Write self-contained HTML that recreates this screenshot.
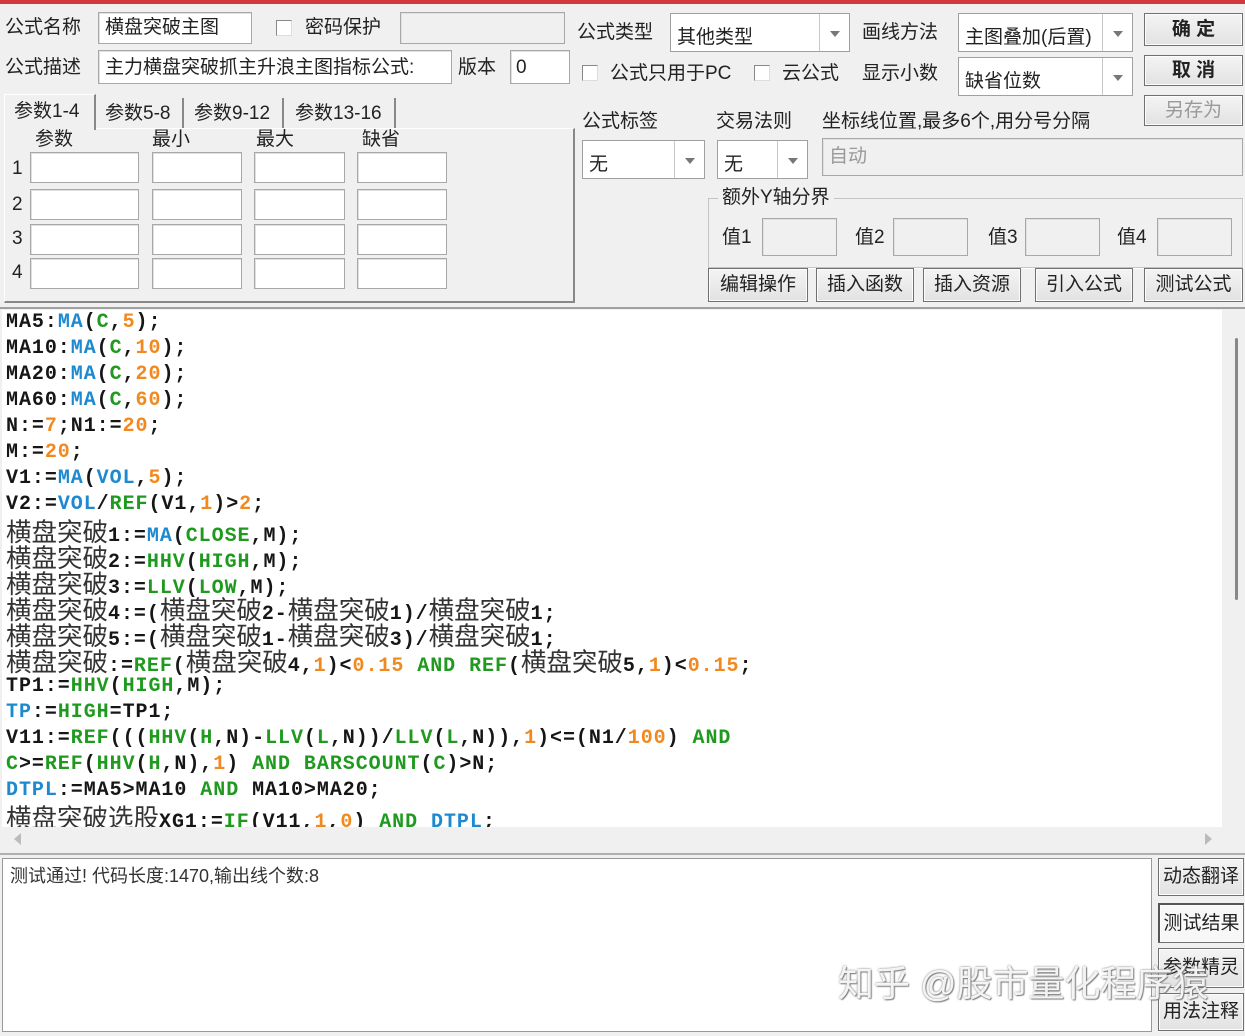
<!DOCTYPE html><html><head><meta charset="utf-8"><style>
*{box-sizing:border-box;margin:0;padding:0}
body{width:1245px;height:1036px;background:#f0f0f0;position:relative;overflow:hidden;font-family:"Liberation Sans","Microsoft YaHei","Noto Sans CJK SC",sans-serif;font-size:19px;color:#222}
.a{position:absolute}
.lb{position:absolute;white-space:nowrap;line-height:1}
.in{position:absolute;background:#fff;border:1px solid #a8a8a8;box-shadow:inset 1px 1px 0 #e0e0e0}
.dis{background:#f0f0f0}
.cb{position:absolute;width:16px;height:16px;background:#fff;border:1px solid #888;border-right-color:#ddd;border-bottom-color:#ddd}
.combo{position:absolute;background:#fff;border:1px solid #a0a0a0;font-size:19px;padding:8px 0 0 6px;white-space:nowrap}
.combo .ar{position:absolute;top:0;right:0;width:30px;height:100%;border-left:1px solid #c8c8c8}
.combo .ar:after{content:"";position:absolute;left:10px;top:50%;margin-top:-2px;border:5px solid transparent;border-top:6px solid #777;border-bottom:0}
.btn{position:absolute;background:linear-gradient(#f4f4f4,#e2e2e2);border:1px solid #707070;box-shadow:inset 0 0 0 1px #fcfcfc;text-align:center;font-size:19px;white-space:nowrap}
.code{position:absolute;left:2px;top:310px;width:1220px;height:517px;background:#fff;overflow:hidden}
.code div{height:26px;line-height:26px;font-family:"Liberation Mono",monospace;font-weight:bold;font-size:20px;letter-spacing:0.95px;white-space:pre;color:#161616;padding-left:4px}
.c{font-family:"Noto Sans CJK SC",sans-serif;font-weight:normal;font-size:25.5px;color:#333;letter-spacing:0}
.b{color:#1d8ad0}.g{color:#1f9a1f}.o{color:#f08a20}
</style></head><body>
<div class="a" style="left:0;top:0;width:1245px;height:4px;background:#d2383c"></div>

<div class="lb" style="left:5px;top:18px">公式名称</div>
<div class="in" style="left:98px;top:12px;width:154px;height:32px"></div>
<div class="lb" style="left:105px;top:18px">横盘突破主图</div>
<div class="cb" style="left:276px;top:20px"></div>
<div class="lb" style="left:305px;top:18px">密码保护</div>
<div class="in dis" style="left:400px;top:12px;width:165px;height:32px"></div>

<div class="lb" style="left:5px;top:58px">公式描述</div>
<div class="in" style="left:98px;top:50px;width:354px;height:34px"></div>
<div class="lb" style="left:105px;top:58px">主力横盘突破抓主升浪主图指标公式:</div>
<div class="lb" style="left:458px;top:58px">版本</div>
<div class="in" style="left:510px;top:50px;width:60px;height:34px"></div>
<div class="lb" style="left:516px;top:58px">0</div>

<div class="a" style="left:4px;top:128px;width:571px;height:175px;border:1px solid #d8d8d8;border-right:2px solid #888;border-bottom:2px solid #888;border-left-color:#fff;border-top-color:#fff"></div>
<div class="a" style="left:4px;top:94px;width:92px;height:36px;border:1px solid #fff;border-right:2px solid #888;border-bottom:0;background:#f0f0f0"></div>
<div class="lb" style="left:14px;top:102px">参数1-4</div>
<div class="a" style="left:97px;top:98px;width:87px;height:30px;border-right:2px solid #888"></div>
<div class="lb" style="left:105px;top:104px">参数5-8</div>
<div class="a" style="left:186px;top:98px;width:98px;height:30px;border-right:2px solid #888"></div>
<div class="lb" style="left:194px;top:104px">参数9-12</div>
<div class="a" style="left:286px;top:98px;width:110px;height:30px;border-right:2px solid #888"></div>
<div class="lb" style="left:295px;top:104px">参数13-16</div>
<div class="lb" style="left:35px;top:130px">参数</div>
<div class="lb" style="left:152px;top:130px">最小</div>
<div class="lb" style="left:256px;top:130px">最大</div>
<div class="lb" style="left:362px;top:130px">缺省</div>
<div class="lb" style="left:12px;top:159px">1</div><div class="lb" style="left:12px;top:195px">2</div><div class="lb" style="left:12px;top:229px">3</div><div class="lb" style="left:12px;top:263px">4</div>
<div class="in" style="left:30px;top:152px;width:109px;height:31px"></div><div class="in" style="left:152px;top:152px;width:90px;height:31px"></div><div class="in" style="left:254px;top:152px;width:91px;height:31px"></div><div class="in" style="left:357px;top:152px;width:90px;height:31px"></div>
<div class="in" style="left:30px;top:189px;width:109px;height:31px"></div><div class="in" style="left:152px;top:189px;width:90px;height:31px"></div><div class="in" style="left:254px;top:189px;width:91px;height:31px"></div><div class="in" style="left:357px;top:189px;width:90px;height:31px"></div>
<div class="in" style="left:30px;top:224px;width:109px;height:31px"></div><div class="in" style="left:152px;top:224px;width:90px;height:31px"></div><div class="in" style="left:254px;top:224px;width:91px;height:31px"></div><div class="in" style="left:357px;top:224px;width:90px;height:31px"></div>
<div class="in" style="left:30px;top:258px;width:109px;height:31px"></div><div class="in" style="left:152px;top:258px;width:90px;height:31px"></div><div class="in" style="left:254px;top:258px;width:91px;height:31px"></div><div class="in" style="left:357px;top:258px;width:90px;height:31px"></div>

<div class="lb" style="left:577px;top:23px">公式类型</div>
<div class="combo" style="left:670px;top:13px;width:180px;height:39px">其他类型<span class="ar"></span></div>
<div class="lb" style="left:862px;top:23px">画线方法</div>
<div class="combo" style="left:958px;top:13px;width:175px;height:39px">主图叠加(后置)<span class="ar"></span></div>
<div class="btn" style="left:1144px;top:13px;width:99px;height:33px;line-height:31px;font-weight:bold">确 定</div>
<div class="btn" style="left:1144px;top:55px;width:99px;height:31px;line-height:29px;font-weight:bold">取 消</div>
<div class="btn" style="left:1144px;top:95px;width:99px;height:31px;line-height:29px;color:#999">另存为</div>
<div class="cb" style="left:582px;top:65px"></div>
<div class="lb" style="left:610px;top:64px">公式只用于PC</div>
<div class="cb" style="left:754px;top:65px"></div>
<div class="lb" style="left:782px;top:64px">云公式</div>
<div class="lb" style="left:862px;top:64px">显示小数</div>
<div class="combo" style="left:958px;top:57px;width:175px;height:39px">缺省位数<span class="ar"></span></div>
<div class="lb" style="left:582px;top:112px">公式标签</div>
<div class="lb" style="left:716px;top:112px">交易法则</div>
<div class="lb" style="left:822px;top:112px">坐标线位置,最多6个,用分号分隔</div>
<div class="combo" style="left:582px;top:140px;width:123px;height:39px">无<span class="ar"></span></div>
<div class="combo" style="left:717px;top:140px;width:91px;height:39px">无<span class="ar"></span></div>
<div class="in dis" style="left:822px;top:138px;width:421px;height:38px"></div>
<div class="lb" style="left:829px;top:147px;color:#999">自动</div>
<div class="a" style="left:708px;top:198px;width:535px;height:70px;border:1px solid #c4c4c4;box-shadow:1px 1px 0 #fff"></div>
<div class="lb" style="left:718px;top:188px;background:#f0f0f0;padding:0 4px">额外Y轴分界</div>
<div class="lb" style="left:722px;top:228px">值1</div><div class="in dis" style="left:762px;top:218px;width:75px;height:38px"></div>
<div class="lb" style="left:855px;top:228px">值2</div><div class="in dis" style="left:893px;top:218px;width:75px;height:38px"></div>
<div class="lb" style="left:988px;top:228px">值3</div><div class="in dis" style="left:1025px;top:218px;width:75px;height:38px"></div>
<div class="lb" style="left:1117px;top:228px">值4</div><div class="in dis" style="left:1157px;top:218px;width:75px;height:38px"></div>
<div class="btn" style="left:708px;top:268px;width:100px;height:34px;line-height:32px">编辑操作</div>
<div class="btn" style="left:816px;top:268px;width:98px;height:34px;line-height:32px">插入函数</div>
<div class="btn" style="left:923px;top:268px;width:98px;height:34px;line-height:32px">插入资源</div>
<div class="btn" style="left:1035px;top:268px;width:98px;height:34px;line-height:32px">引入公式</div>
<div class="btn" style="left:1144px;top:268px;width:99px;height:34px;line-height:32px">测试公式</div>

<div class="a" style="left:0;top:307px;width:1245px;height:2px;background:#a0a0a0"></div>
<div class="code">
<div>MA5:<span class="b">MA</span>(<span class="g">C</span>,<span class="o">5</span>);</div>
<div>MA10:<span class="b">MA</span>(<span class="g">C</span>,<span class="o">10</span>);</div>
<div>MA20:<span class="b">MA</span>(<span class="g">C</span>,<span class="o">20</span>);</div>
<div>MA60:<span class="b">MA</span>(<span class="g">C</span>,<span class="o">60</span>);</div>
<div>N:=<span class="o">7</span>;N1:=<span class="o">20</span>;</div>
<div>M:=<span class="o">20</span>;</div>
<div>V1:=<span class="b">MA</span>(<span class="b">VOL</span>,<span class="o">5</span>);</div>
<div>V2:=<span class="b">VOL</span>/<span class="g">REF</span>(V1,<span class="o">1</span>)&gt;<span class="o">2</span>;</div>
<div><span class="c">横盘突破</span>1:=<span class="b">MA</span>(<span class="g">CLOSE</span>,M);</div>
<div><span class="c">横盘突破</span>2:=<span class="g">HHV</span>(<span class="g">HIGH</span>,M);</div>
<div><span class="c">横盘突破</span>3:=<span class="g">LLV</span>(<span class="g">LOW</span>,M);</div>
<div><span class="c">横盘突破</span>4:=(<span class="c">横盘突破</span>2-<span class="c">横盘突破</span>1)/<span class="c">横盘突破</span>1;</div>
<div><span class="c">横盘突破</span>5:=(<span class="c">横盘突破</span>1-<span class="c">横盘突破</span>3)/<span class="c">横盘突破</span>1;</div>
<div><span class="c">横盘突破</span>:=<span class="g">REF</span>(<span class="c">横盘突破</span>4,<span class="o">1</span>)&lt;<span class="o">0.15</span> <span class="g">AND</span> <span class="g">REF</span>(<span class="c">横盘突破</span>5,<span class="o">1</span>)&lt;<span class="o">0.15</span>;</div>
<div>TP1:=<span class="g">HHV</span>(<span class="g">HIGH</span>,M);</div>
<div><span class="b">TP</span>:=<span class="g">HIGH</span>=TP1;</div>
<div>V11:=<span class="g">REF</span>(((<span class="g">HHV</span>(<span class="g">H</span>,N)-<span class="g">LLV</span>(<span class="g">L</span>,N))/<span class="g">LLV</span>(<span class="g">L</span>,N)),<span class="o">1</span>)&lt;=(N1/<span class="o">100</span>) <span class="g">AND</span></div>
<div><span class="g">C</span>&gt;=<span class="g">REF</span>(<span class="g">HHV</span>(<span class="g">H</span>,N),<span class="o">1</span>) <span class="g">AND</span> <span class="g">BARSCOUNT</span>(<span class="g">C</span>)&gt;N;</div>
<div><span class="b">DTPL</span>:=MA5&gt;MA10 <span class="g">AND</span> MA10&gt;MA20;</div>
<div><span class="c">横盘突破选股</span>XG1:=<span class="g">IF</span>(V11,<span class="o">1</span>,<span class="o">0</span>) <span class="g">AND</span> <span class="b">DTPL</span>;</div>
</div>
<div class="a" style="left:1235px;top:338px;width:3px;height:262px;background:#888;border-radius:2px"></div>
<div class="a" style="left:0;top:853px;width:1245px;height:2px;background:#b0b0b0"></div>
<div class="a" style="left:14px;top:833px;border:6px solid transparent;border-right:7px solid #bbb;border-left:0"></div>
<div class="a" style="left:1205px;top:833px;border:6px solid transparent;border-left:7px solid #bbb;border-right:0"></div>

<div class="a" style="left:2px;top:858px;width:1150px;height:174px;background:#fff;border:1px solid #999"></div>
<div class="lb" style="left:10px;top:867px;font-size:18px;color:#333">测试通过! 代码长度:1470,输出线个数:8</div>
<div class="btn" style="left:1158px;top:858px;width:86px;height:38px;line-height:36px">动态翻译</div>
<div class="btn" style="left:1158px;top:903px;width:86px;height:40px;line-height:38px;background:#f7f7f7;border-left:2px solid #555;border-top:2px solid #555">测试结果</div>
<div class="btn" style="left:1158px;top:948px;width:86px;height:40px;line-height:38px">参数精灵</div>
<div class="btn" style="left:1158px;top:993px;width:86px;height:38px;line-height:36px">用法注释</div>
<div class="lb" style="left:838px;top:966px;font-size:36px;color:rgba(255,255,255,.9);text-shadow:0 0 2px #777,1px 1px 1px #888">知乎 @股市量化程序猿</div>
</body></html>
